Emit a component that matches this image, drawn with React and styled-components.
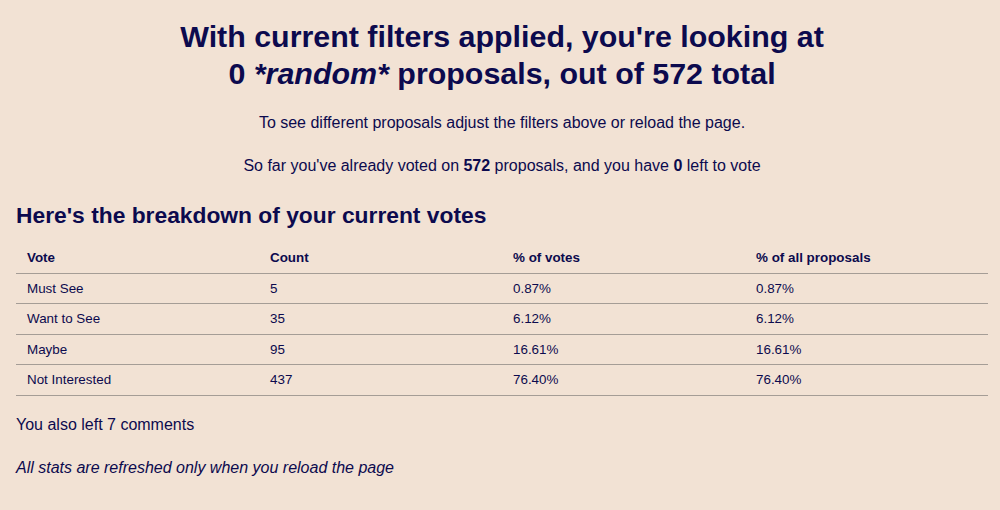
import React from "react";
import styled, { createGlobalStyle } from "styled-components";

const GlobalStyle = createGlobalStyle`
  html, body {
    margin: 0;
    padding: 0;
    background: #f2e2d4;
  }
  body {
    font-family: "Liberation Sans", Arial, sans-serif;
    color: #0c0a4e;
  }
`;

const rows = [
  { vote: "Must See", count: 5, pctVotes: "0.87%", pctAll: "0.87%" },
  { vote: "Want to See", count: 35, pctVotes: "6.12%", pctAll: "6.12%" },
  { vote: "Maybe", count: 95, pctVotes: "16.61%", pctAll: "16.61%" },
  { vote: "Not Interested", count: 437, pctVotes: "76.40%", pctAll: "76.40%" },
];

export default function App() {
  return (
    <>
      <GlobalStyle />
      <Page>
        <Title>
          With current filters applied, you're looking at
          <br />0 <em>*random*</em> proposals, out of 572 total
        </Title>
        <Centered>
          To see different proposals adjust the filters above or reload the
          page.
        </Centered>
        <Centered>
          So far you've already voted on <b>572</b> proposals, and you have{" "}
          <b>0</b> left to vote
        </Centered>
        <SubHeading>Here's the breakdown of your current votes</SubHeading>
        <Table>
          <thead>
            <tr>
              <Th>Vote</Th>
              <Th>Count</Th>
              <Th>% of votes</Th>
              <Th>% of all proposals</Th>
            </tr>
          </thead>
          <tbody>
            {rows.map((row) => (
              <tr key={row.vote}>
                <Td>{row.vote}</Td>
                <Td>{row.count}</Td>
                <Td>{row.pctVotes}</Td>
                <Td>{row.pctAll}</Td>
              </tr>
            ))}
          </tbody>
        </Table>
        <Note>You also left 7 comments</Note>
        <Note $italic>All stats are refreshed only when you reload the page</Note>
      </Page>
    </>
  );
}

const Page = styled.div`
  padding: 18px 12px 20px 16px;
`;

const Title = styled.h1`
  margin: 0 0 22px;
  text-align: center;
  font-weight: bold;
  font-size: 30.4px;
  line-height: 37px;
  em {
    font-style: italic;
  }
`;

const Centered = styled.p`
  margin: 0 0 25px;
  text-align: center;
  font-size: 16px;
  line-height: 18px;
  b {
    font-weight: bold;
  }
`;

const SubHeading = styled.h2`
  margin: 0 0 13px;
  font-size: 22.8px;
  line-height: 30px;
  font-weight: bold;
`;

const Table = styled.table`
  width: 972px;
  border-collapse: collapse;
  table-layout: fixed;
  margin-bottom: 19px;
`;

const Th = styled.th`
  text-align: left;
  font-size: 13.4px;
  font-weight: bold;
  padding: 0 11px;
  height: 29.5px;
  border-bottom: 1.5px solid #a59d96;
`;

const Td = styled.td`
  font-size: 13.4px;
  padding: 0 11px;
  height: 29.5px;
  border-bottom: 1.5px solid #a59d96;
`;

const Note = styled.p`
  margin: 0 0 23px;
  font-size: 16px;
  line-height: 20px;
  font-style: ${(p) => (p.$italic ? "italic" : "normal")};
`;
